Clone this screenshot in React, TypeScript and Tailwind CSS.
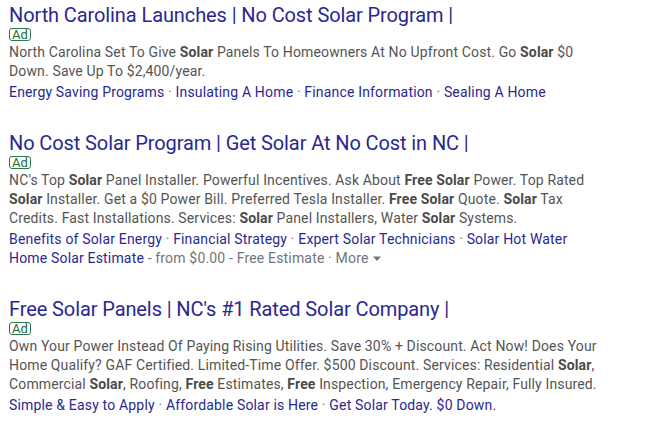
import { Fragment } from "react";

type Part = string | { b: string };

interface AdData {
  title: string;
  body: Part[];
  links: string[][];
  extra?: boolean;
}

const ADS: AdData[] = [
  {
    title: "North Carolina Launches | No Cost Solar Program |",
    body: [
      "North Carolina Set To Give ",
      { b: "Solar" },
      " Panels To Homeowners At No Upfront Cost. Go ",
      { b: "Solar" },
      " $0 Down. Save Up To $2,400/year.",
    ],
    links: [["Energy Saving Programs", "Insulating A Home", "Finance Information", "Sealing A Home"]],
  },
  {
    title: "No Cost Solar Program | Get Solar At No Cost in NC |",
    body: [
      "NC's Top ",
      { b: "Solar" },
      " Panel Installer. Powerful Incentives. Ask About ",
      { b: "Free Solar" },
      " Power. Top Rated ",
      { b: "Solar" },
      " Installer. Get a $0 Power Bill. Preferred Tesla Installer. ",
      { b: "Free Solar" },
      " Quote. ",
      { b: "Solar" },
      " Tax Credits. Fast Installations. Services: ",
      { b: "Solar" },
      " Panel Installers, Water ",
      { b: "Solar" },
      " Systems.",
    ],
    links: [["Benefits of Solar Energy", "Financial Strategy", "Expert Solar Technicians", "Solar Hot Water"]],
    extra: true,
  },
  {
    title: "Free Solar Panels | NC's #1 Rated Solar Company |",
    body: [
      "Own Your Power Instead Of Paying Rising Utilities. Save 30% + Discount. Act Now! Does Your Home Qualify? GAF Certified. Limited-Time Offer. $500 Discount. Services: Residential ",
      { b: "Solar" },
      ", Commercial ",
      { b: "Solar" },
      ", Roofing, ",
      { b: "Free" },
      " Estimates, ",
      { b: "Free" },
      " Inspection, Emergency Repair, Fully Insured.",
    ],
    links: [["Simple & Easy to Apply", "Affordable Solar is Here", "Get Solar Today. $0 Down."]],
  },
];

function Dot() {
  return <span className="text-[#70757a]"> · </span>;
}

function Ad({ ad }: { ad: AdData }) {
  return (
    <div className="flex flex-col">
      <div className="text-[20px] leading-[26px] tracking-[-0.1px] text-[#2a2890] whitespace-nowrap">{ad.title}</div>
      <div className="flex h-[13px]">
        <span className="flex h-[13px] items-center rounded-[3px] border border-[#2f7a4a] px-[2px] text-[13px] leading-[11px] text-[#256a3c]">
          Ad
        </span>
      </div>
      <p className="mt-[2px] w-[600px] text-[14px] leading-[19px] tracking-[0.14px] text-[#545454]">
        {ad.body.map((p, i) =>
          typeof p === "string" ? (
            <Fragment key={i}>{p}</Fragment>
          ) : (
            <b key={i} className="font-bold text-[#4a4a4a]">
              {p.b}
            </b>
          )
        )}
      </p>
      <div className="mt-[2px] text-[14px] leading-[19px] tracking-[0.17px] text-[#2a2890]">
        {ad.links.map((row, r) => (
          <div key={r} className="whitespace-nowrap">
            {row.map((l, i) => (
              <Fragment key={l}>
                {i > 0 && <Dot />}
                {l}
              </Fragment>
            ))}
          </div>
        ))}
        {ad.extra && (
          <div className="flex items-center whitespace-nowrap">
            <span>Home Solar Estimate</span>
            <span className="text-[#70757a]">&nbsp;- from $0.00 - Free Estimate · More</span>
            <svg width="10" height="6" viewBox="0 0 10 6" className="ml-[3px] mt-[1px]">
              <path d="M1 0.5 L9 0.5 L5 5 Z" fill="#70757a" />
            </svg>
          </div>
        )}
      </div>
    </div>
  );
}

export default function App() {
  return (
    <div
      className="h-[426px] w-[646px] overflow-hidden bg-white pl-[9px] pt-[2px]"
      style={{ fontFamily: "Roboto, 'Liberation Sans', sans-serif" }}
    >
      <div className="flex flex-col gap-[28px]">
        {ADS.map((ad) => (
          <Ad key={ad.title} ad={ad} />
        ))}
      </div>
    </div>
  );
}
